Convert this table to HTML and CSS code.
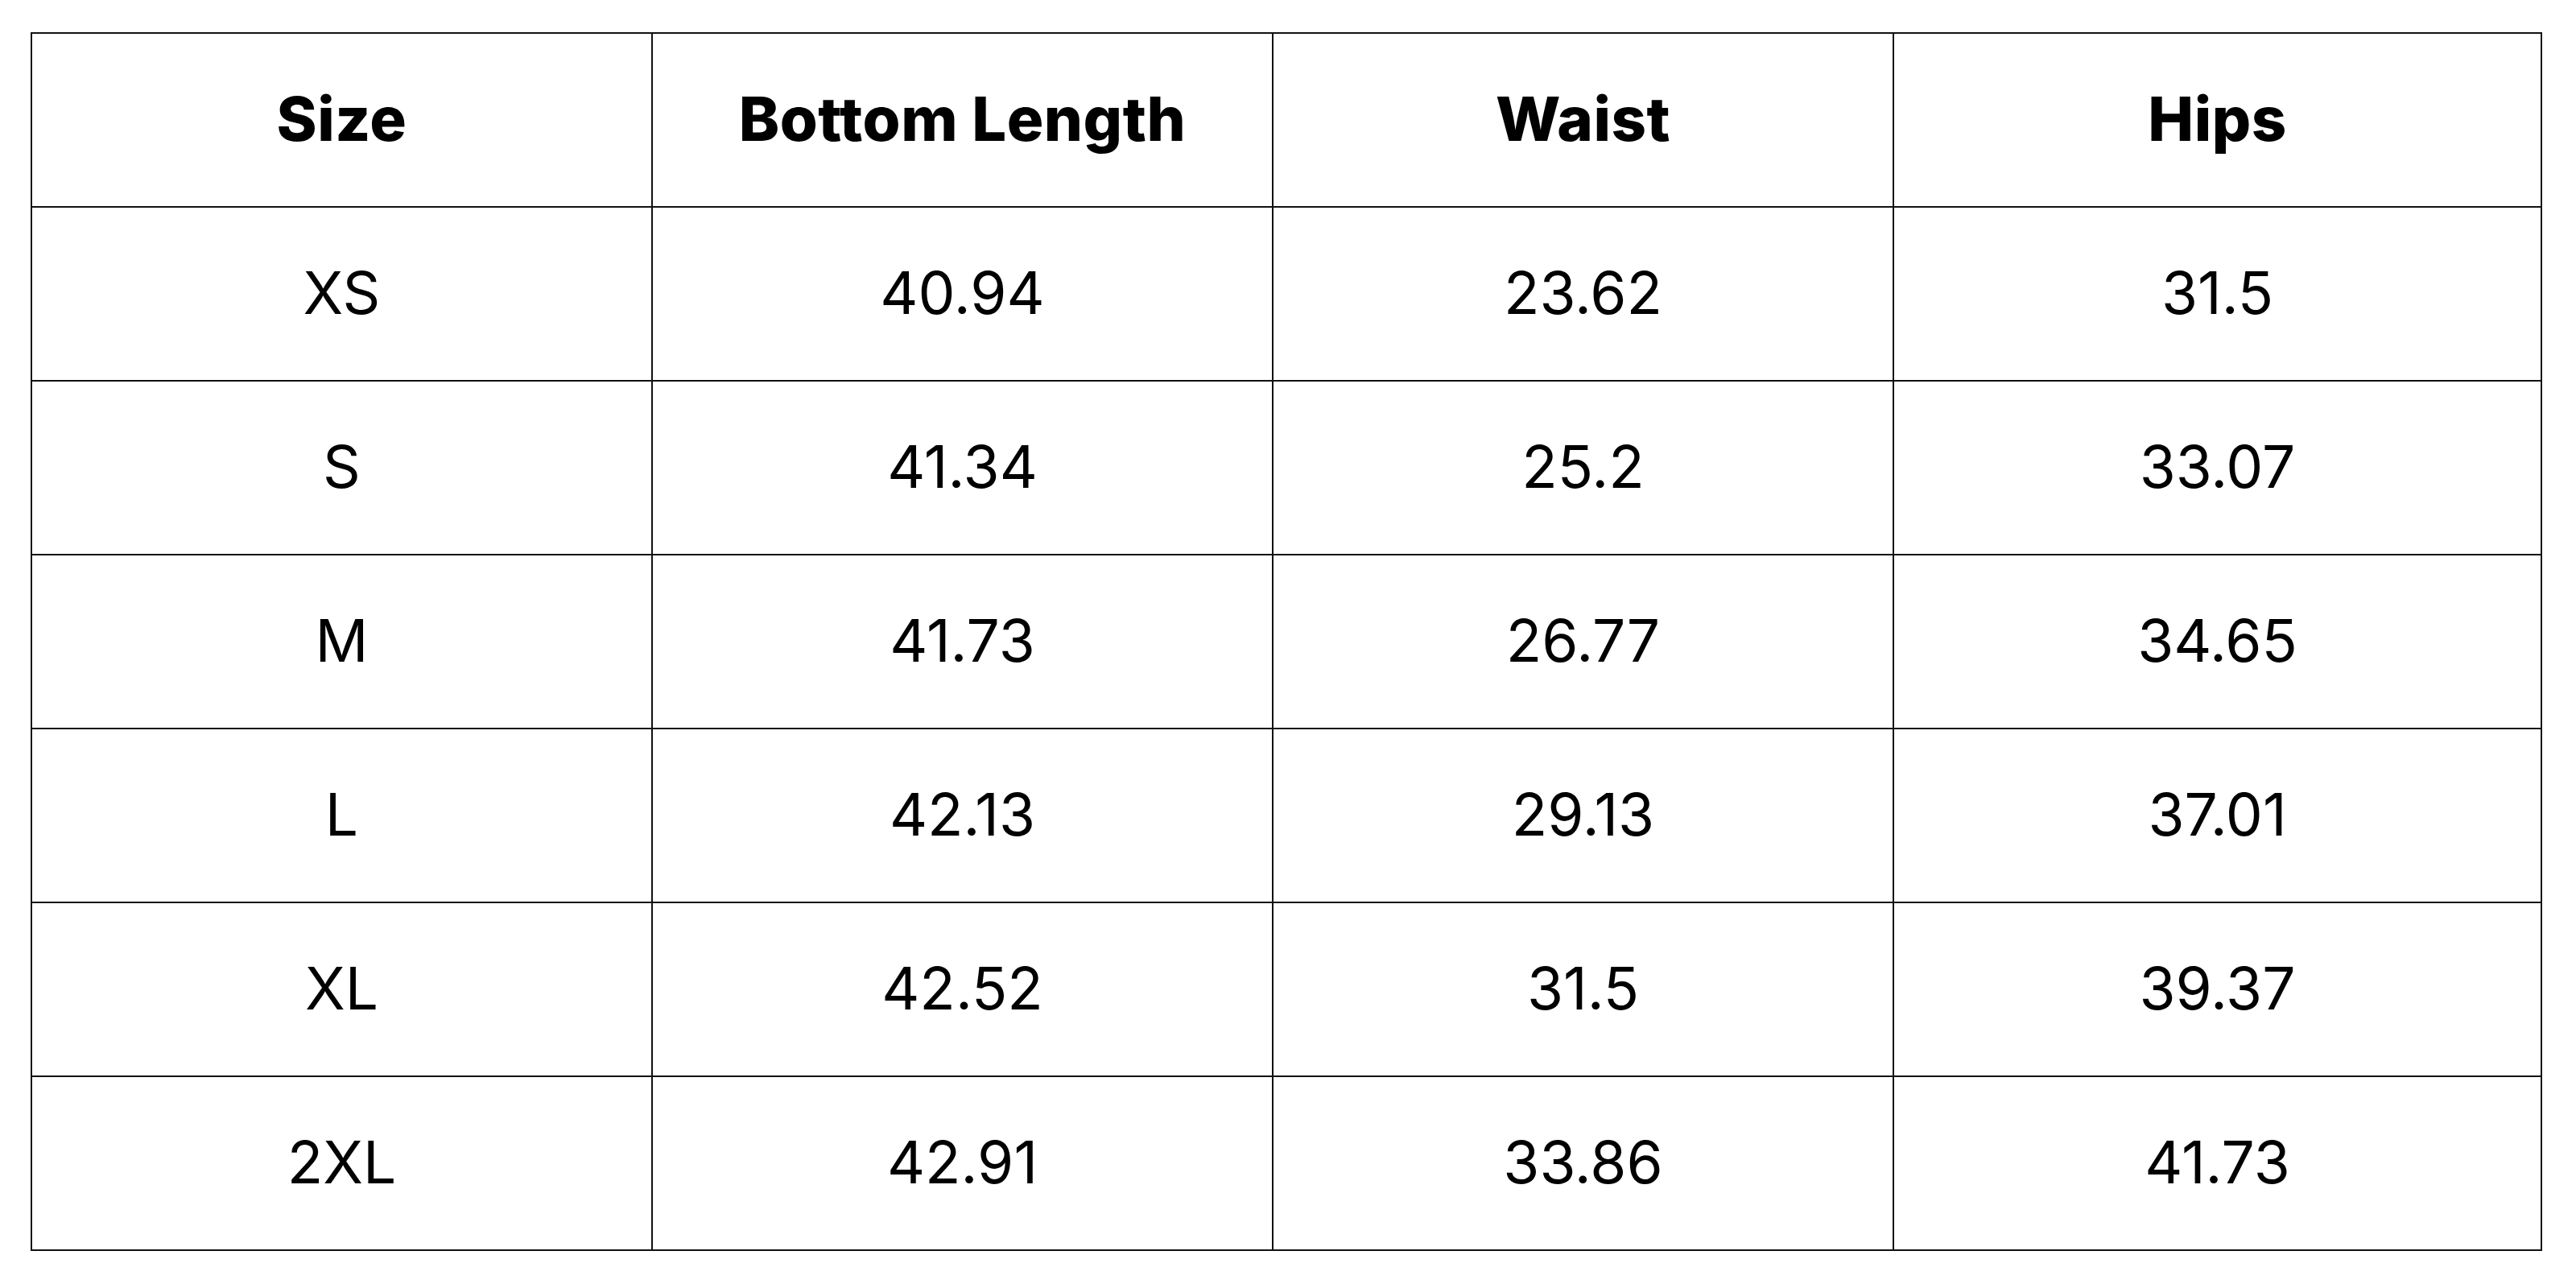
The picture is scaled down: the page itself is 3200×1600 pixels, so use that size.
FILE: index.html
```html
<!DOCTYPE html>
<html>
<head>
<meta charset="utf-8">
<link rel="stylesheet" href="styles.css">
</head>
<body>
<table class="size-table">
  <colgroup>
    <col class="c1"><col class="c2"><col class="c3"><col class="c4">
  </colgroup>
  <thead>
    <tr><th>Size</th><th>Bottom Length</th><th>Waist</th><th>Hips</th></tr>
  </thead>
  <tbody>
    <tr><td>XS</td><td>40.94</td><td>23.62</td><td>31.5</td></tr>
    <tr><td>S</td><td>41.34</td><td>25.2</td><td>33.07</td></tr>
    <tr><td>M</td><td>41.73</td><td>26.77</td><td>34.65</td></tr>
    <tr><td>L</td><td>42.13</td><td>29.13</td><td>37.01</td></tr>
    <tr><td>XL</td><td>42.52</td><td>31.5</td><td>39.37</td></tr>
    <tr><td>2XL</td><td>42.91</td><td>33.86</td><td>41.73</td></tr>
  </tbody>
</table>
</body>
</html>
```
FILE: styles.css
```css
html, body {
  margin: 0;
  background: #fff;
}
body {
  padding: 40px 0 0 38px;
  font-family: Inter, "Noto Sans", sans-serif;
  color: #000;
}
.size-table {
  border-collapse: collapse;
  table-layout: fixed;
  width: 3118px;
}
.c1 { width: 771px; }
.c2 { width: 771px; }
.c3 { width: 771px; }
.c4 { width: 805px; }
.size-table th,
.size-table td {
  border: 2px solid #111;
  text-align: center;
  vertical-align: middle;
  height: 210px;
  padding: 0 0 4px 0;
}
.size-table th {
  font-weight: 800;
  font-size: 76px;
  letter-spacing: 0.5px;
}
.size-table td {
  font-weight: 400;
  font-size: 73px;
}
```
